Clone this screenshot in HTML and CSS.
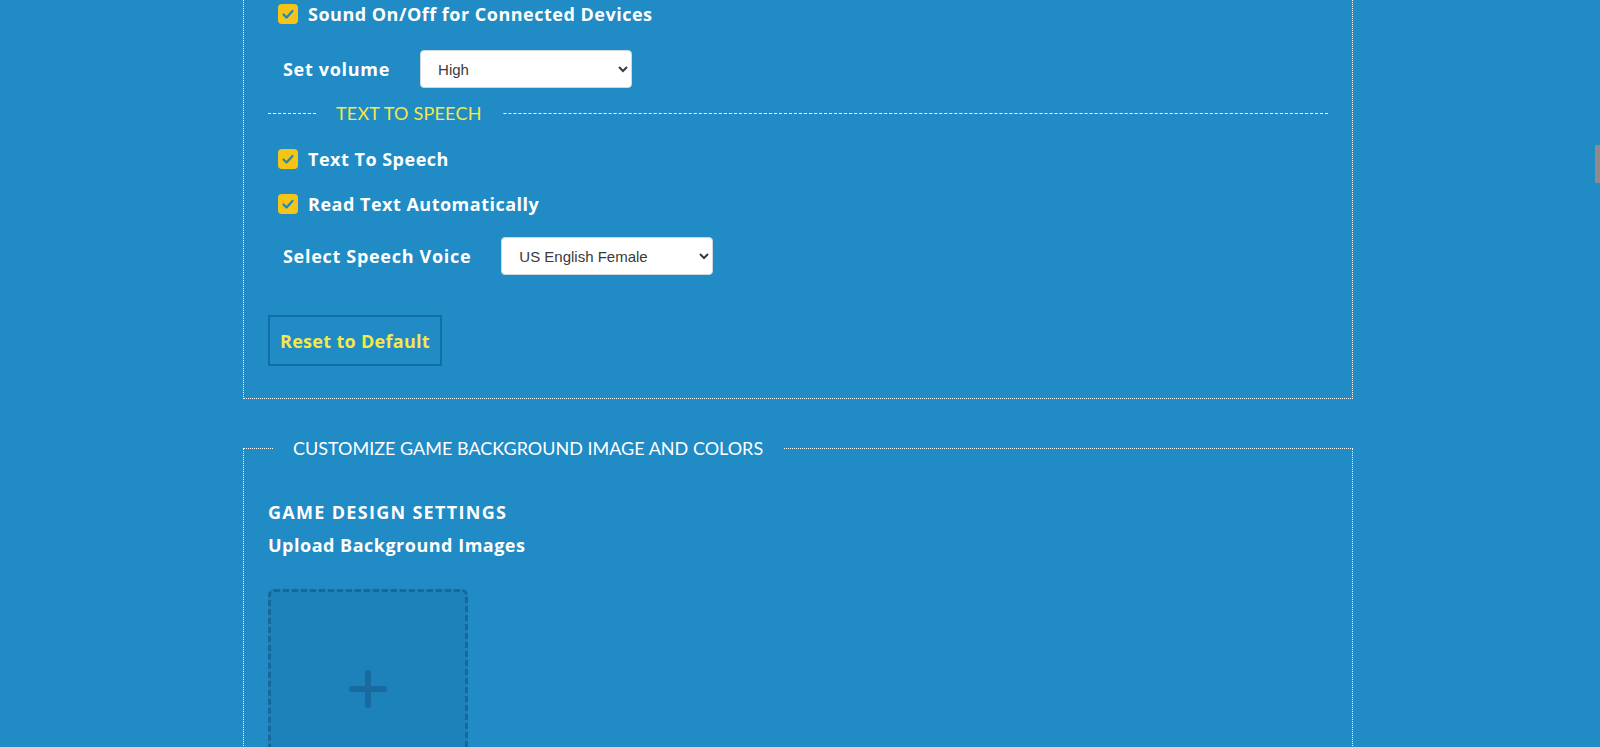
FILE: index.html
```html
<!DOCTYPE html>
<html lang="en">
<head>
<meta charset="utf-8">
<title>Game Settings</title>
<link rel="stylesheet" href="styles.css">
</head>
<body>
<div class="page">
  <fieldset class="panel panel-audio">
    <label class="check-row">
      <span class="check"><svg viewBox="0 0 20 20" width="20" height="20"><path d="M5.5 10.5l3 3 6-6.5" fill="none" stroke="#1f86bf" stroke-width="2.2" stroke-linecap="round" stroke-linejoin="round"/></svg></span>
      <span class="check-text">Sound On/Off for Connected Devices</span>
    </label>
    <div class="field-row">
      <span class="field-label">Set volume</span>
      <select class="select"><option>High</option><option>Medium</option><option>Low</option></select>
    </div>
    <fieldset class="subsection">
      <legend class="sub-legend">TEXT TO SPEECH</legend>
      <label class="check-row check-row-first">
        <span class="check"><svg viewBox="0 0 20 20" width="20" height="20"><path d="M5.5 10.5l3 3 6-6.5" fill="none" stroke="#1f86bf" stroke-width="2.2" stroke-linecap="round" stroke-linejoin="round"/></svg></span>
        <span class="check-text">Text To Speech</span>
      </label>
      <label class="check-row check-row-next">
        <span class="check"><svg viewBox="0 0 20 20" width="20" height="20"><path d="M5.5 10.5l3 3 6-6.5" fill="none" stroke="#1f86bf" stroke-width="2.2" stroke-linecap="round" stroke-linejoin="round"/></svg></span>
        <span class="check-text">Read Text Automatically</span>
      </label>
      <div class="field-row field-row-voice">
        <span class="field-label">Select Speech Voice</span>
        <select class="select"><option>US English Female</option><option>US English Male</option><option>UK English Female</option></select>
      </div>
    </fieldset>
    <button class="btn-reset" type="button">Reset to Default</button>
  </fieldset>

  <fieldset class="panel panel-design">
    <legend class="panel-legend">CUSTOMIZE GAME BACKGROUND IMAGE AND COLORS</legend>
    <h3 class="section-title">GAME DESIGN SETTINGS</h3>
    <h4 class="section-sub">Upload Background Images</h4>
    <div class="upload">
      <svg viewBox="0 0 40 40" width="40" height="40"><path d="M20 4v32M4 20h32" stroke="#196b9f" stroke-width="6" stroke-linecap="round"/></svg>
    </div>
  </fieldset>
</div>
<div class="scroll-thumb"></div>
</body>
</html>
```

FILE: styles.css
```css
html, body {
  margin: 0;
  padding: 0;
}
body {
  background: #208bc4;
  font-family: "Open Sans", "Lato", sans-serif;
  color: #ffffff;
  overflow: hidden;
  height: 747px;
}
.page {
  width: 1110px;
  margin-left: 243px;
  margin-top: -31px;
}
.panel {
  margin: 0;
  border: 1px dotted #ffffff;
  padding: 31px 24px 32px 24px;
  min-width: 0;
}
.check-row {
  display: flex;
  align-items: center;
  height: 26px;
  padding-left: 10px;
  gap: 10px;
  cursor: pointer;
}
.check {
  width: 20px;
  height: 20px;
  border-radius: 4px;
  background: #f4c416;
  display: flex;
  align-items: center;
  justify-content: center;
  flex: none;
}
.check svg {
  width: 20px;
  height: 20px;
}
.check-text,
.field-label,
.section-title,
.section-sub {
  font-size: 18px;
  font-weight: 700;
  letter-spacing: 0.5px;
}
.section-title {
  letter-spacing: 1.3px;
}
.field-row {
  display: flex;
  align-items: center;
  margin-top: 23px;
  padding-left: 15px;
  height: 38px;
}
.field-row-voice {
  margin-top: 20px;
}
.field-label {
  margin-right: 30px;
  letter-spacing: 0.7px;
}
.select {
  width: 212px;
  height: 38px;
  border: 1px solid #cfd6dc;
  border-radius: 4px;
  background-color: #ffffff;
  color: #3a3a3a;
  font-family: "Liberation Sans", Arial, sans-serif;
  font-size: 15px;
  padding: 0 10px 0 13px;
}
.subsection {
  margin: 13px 0 0 0;
  padding: 0;
  border: 0;
  border-top: 1px dashed #ffffff;
  min-width: 0;
}
.sub-legend {
  margin-left: 48px;
  padding: 0 20px;
  color: #f4e84b;
  font-family: "Lato", sans-serif;
  font-size: 18px;
  line-height: 24px;
  letter-spacing: 0.2px;
}
.check-row-first {
  margin-top: 21px;
}
.check-row-next {
  margin-top: 19px;
}
.btn-reset {
  display: block;
  margin-top: 40px;
  height: 51px;
  padding: 0 10px;
  background: transparent;
  border: 2px solid #0f6fa8;
  color: #f4e84b;
  font-family: "Open Sans", "Lato", sans-serif;
  font-size: 18px;
  font-weight: 700;
  letter-spacing: 0.3px;
}
.panel-design {
  margin-top: 37px;
  padding-top: 40px;
  padding-bottom: 40px;
}
.panel-legend {
  margin-left: 5px;
  padding: 0 20px;
  font-family: "Lato", sans-serif;
  font-size: 18px;
  line-height: 24px;
  letter-spacing: 0;
}
.section-sub {
  margin: 9px 0 0 0;
  line-height: 24px;
}
.section-title {
  margin: 0;
  line-height: 24px;
}
.upload {
  margin-top: 32px;
  width: 200px;
  height: 200px;
  box-sizing: border-box;
  border: 3px dashed #17679b;
  border-radius: 6px;
  background: #1d82ba;
  display: flex;
  align-items: center;
  justify-content: center;
}
.scroll-thumb {
  position: fixed;
  right: 0;
  top: 145px;
  width: 5px;
  height: 38px;
  background: #8c8c8c;
}
```
